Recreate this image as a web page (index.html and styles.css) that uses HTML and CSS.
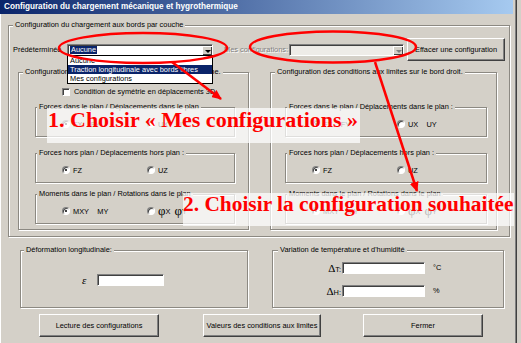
FILE: index.html
```html
<!DOCTYPE html>
<html lang="fr">
<head>
    <meta charset="UTF-8">
    <title>Configuration du chargement mécanique et hygrothermique</title>
    <link rel="stylesheet" href="styles.css">
</head>
<body>
<div class="window">
    <div class="titlebar">Configuration du chargement mécanique et hygrothermique</div>

    <fieldset class="group outer">
        <legend>Configuration du chargement aux bords par couche</legend>
        <div class="preset-row">
            <span class="preset-label">Prédéterminée</span>
            <div class="combo combo-preset">
                <span class="combo-value"><span class="selected">Aucune</span></span>
                <span class="combo-btn"></span>
                <ul class="droplist">
                    <li>Aucune</li>
                    <li class="hover">Traction longitudinale avec bords libres</li>
                    <li>Mes configurations</li>
                </ul>
            </div>
            <span class="mine-label disabled">Mes configurations:</span>
            <div class="combo combo-mine disabled">
                <span class="combo-value"></span>
                <span class="combo-btn"></span>
            </div>
            <button class="btn btn-erase">Effacer une configuration</button>
        </div>

        <div class="sides">
            <fieldset class="group side side-left">
                <legend>Configuration des conditions aux limites sur le bord gauche.</legend>
                <div class="check-row"><span class="checkbox"></span>Condition de symétrie en déplacements 3D</div>
                <fieldset class="group sub">
                    <legend>Forces dans le plan / Déplacements dans le plan</legend>
                    <div class="radio-row">
                        <span class="option"><span class="radio checked"></span>FX&nbsp;&nbsp;&nbsp;&nbsp;FY</span>
                        <span class="option"><span class="radio"></span>UX&nbsp;&nbsp;&nbsp;&nbsp;UY</span>
                    </div>
                </fieldset>
                <fieldset class="group sub">
                    <legend>Forces hors plan / Déplacements hors plan :</legend>
                    <div class="radio-row">
                        <span class="option"><span class="radio checked"></span>FZ</span>
                        <span class="option"><span class="radio"></span>UZ</span>
                    </div>
                </fieldset>
                <fieldset class="group sub">
                    <legend>Moments dans le plan / Rotations dans le plan</legend>
                    <div class="radio-row">
                        <span class="option"><span class="radio checked"></span>MXY&nbsp;&nbsp;&nbsp;&nbsp;MY</span>
                        <span class="option"><span class="radio"></span><span class="phi">φ</span>X&nbsp;&nbsp;<span class="phi">φ</span>Y</span>
                    </div>
                </fieldset>
            </fieldset>

            <fieldset class="group side side-right">
                <legend>Configuration des conditions aux limites sur le bord droit.</legend>
                <div class="check-row"></div>
                <fieldset class="group sub">
                    <legend>Forces dans le plan / Déplacements dans le plan :</legend>
                    <div class="radio-row">
                        <span class="option"><span class="radio checked"></span>FX&nbsp;&nbsp;&nbsp;&nbsp;FY</span>
                        <span class="option"><span class="radio"></span>UX&nbsp;&nbsp;&nbsp;&nbsp;UY</span>
                    </div>
                </fieldset>
                <fieldset class="group sub">
                    <legend>Forces hors plan / Déplacements hors plan :</legend>
                    <div class="radio-row">
                        <span class="option"><span class="radio checked"></span>FZ</span>
                        <span class="option"><span class="radio"></span>UZ</span>
                    </div>
                </fieldset>
                <fieldset class="group sub">
                    <legend>Moments dans le plan / Rotations dans le plan</legend>
                    <div class="radio-row">
                        <span class="option"><span class="radio checked"></span>MXY&nbsp;&nbsp;&nbsp;&nbsp;MY</span>
                        <span class="option"><span class="radio"></span><span class="phi">φ</span>X&nbsp;&nbsp;<span class="phi">φ</span>Y</span>
                    </div>
                </fieldset>
            </fieldset>
        </div>
    </fieldset>

    <div class="lower">
        <fieldset class="group strain">
            <legend>Déformation longitudinale:</legend>
            <div class="field-row eps-row">
                <span class="eps">ε</span>
                <span class="textbox eps-box"></span>
            </div>
        </fieldset>
        <fieldset class="group thermo">
            <legend>Variation de température et d'humidité</legend>
            <div class="field-row">
                <span class="delta-label"><span class="delta">Δ</span>T:</span>
                <span class="textbox"></span>
                <span class="unit">°C</span>
            </div>
            <div class="field-row">
                <span class="delta-label"><span class="delta">Δ</span>H:</span>
                <span class="textbox"></span>
                <span class="unit">%</span>
            </div>
        </fieldset>
    </div>

    <div class="buttons">
        <button class="btn btn-read">Lecture des configurations</button>
        <button class="btn btn-values">Valeurs des conditions aux limites</button>
        <button class="btn btn-close">Fermer</button>
    </div>

    <!-- annotations drawn over the dialog -->
    <svg class="marks" width="521" height="343" viewBox="0 0 521 343">
        <defs>
            <marker id="head" markerUnits="userSpaceOnUse" markerWidth="10" markerHeight="9" refX="9" refY="4.5" orient="auto">
                <path d="M0 0 L10 4.5 L0 9 Z" fill="#ff0000"/>
            </marker>
        </defs>
        <ellipse cx="143" cy="48" rx="84" ry="15" fill="none" stroke="#ff0000" stroke-width="2.5"/>
        <ellipse cx="333" cy="47" rx="83" ry="15.5" fill="none" stroke="#ff0000" stroke-width="2.5"/>
        <line x1="172" y1="62" x2="221" y2="99" stroke="#ff0000" stroke-width="2.5" marker-end="url(#head)"/>
        <line x1="375" y1="62" x2="417" y2="191" stroke="#ff0000" stroke-width="2.5" marker-end="url(#head)"/>
    </svg>
    <div class="note note1">1. Choisir « Mes configurations »</div>
    <div class="note note2">2. Choisir la configuration souhaitée</div>
</div>
</body>
</html>
```

FILE: styles.css
```css
body {
    margin: 0;
    background-color: #d4d0c8;
    font-family: "Liberation Sans", Arial, sans-serif;
    font-size: 7.4px;
    color: #000;
}
.window {
    position: relative;
    width: 516px;
    height: 343px;
    background-color: #d4d0c8;
    border-right: 1px solid #404040;
    box-shadow: inset 1px 0 0 #fff, inset -1px 0 0 #808080;
    overflow: hidden;
}
.titlebar {
    height: 14px;
    line-height: 14px;
    padding-left: 4px;
    margin-right: 3px;
    background: linear-gradient(to right, #0a246a, #a6caf0);
    color: #fff;
    font-weight: bold;
    font-size: 8.2px;
    white-space: nowrap;
}

/* group boxes */
.group {
    margin: 0;
    padding: 0;
    min-width: 0;
    box-sizing: border-box;
    border: 1px solid #8c8982;
    box-shadow: inset 1px 1px 0 #fff, 1px 1px 0 #fff;
}
.group legend {
    margin-left: 3px;
    padding: 0 2px;
    line-height: 10px;
    background-color: #d4d0c8;
    white-space: nowrap;
}
.outer {
    width: 502px;
    margin: 6px 0 0 8px;
}
.outer > legend,
.side > legend { margin-left: 4px; }

.preset-row {
    display: flex;
    align-items: center;
    height: 23px;
    margin: 8px 0 0 4px;
}
.preset-label { width: 54px; }
.mine-label {
    width: 65px;
    margin-left: 11px;
    white-space: nowrap;
}
.disabled {
    color: #808080;
    text-shadow: 1px 1px 0 #fff;
}

/* combo boxes */
.combo {
    position: relative;
    display: flex;
    flex-shrink: 0;
    height: 12px;
    box-sizing: border-box;
    background-color: #fff;
    border: 1px solid;
    border-color: #808080 #fff #fff #808080;
    box-shadow: inset 1px 1px 0 #404040;
}
.combo-preset { width: 146px; }
.combo-mine {
    width: 115px;
    background-color: #eeece8;
}
.combo-value {
    flex: 1;
    padding: 1px 0 0 2px;
    line-height: 8px;
}
.selected {
    display: inline-block;
    padding: 0 1px;
    background-color: #0a246a;
    color: #fff;
}
.combo-btn {
    position: relative;
    width: 9px;
    margin: 1px 0 0;
    background-color: #d4d0c8;
    border-left: 1px solid #fff;
    border-top: 1px solid #fff;
    box-shadow: inset -1px -1px 0 #404040;
}
.combo-btn::after {
    content: "";
    position: absolute;
    left: 2px;
    top: 3px;
    border: 3px solid transparent;
    border-top: 3px solid #000;
    border-bottom: 0;
}
.combo-mine .combo-btn::after { border-top-color: #808080; }
.droplist {
    position: absolute;
    top: 100%;
    left: -1px;
    width: 146px;
    margin: 0;
    padding: 0;
    list-style: none;
    box-sizing: border-box;
    background-color: #fff;
    border: 1px solid #000;
    z-index: 2;
}
.droplist li {
    height: 9px;
    line-height: 9px;
    padding-left: 2px;
    white-space: nowrap;
}
.droplist li.hover {
    background-color: #0a246a;
    color: #fff;
}

/* buttons */
.btn {
    flex-shrink: 0;
    height: 23px;
    padding: 0;
    box-sizing: border-box;
    background-color: #d4d0c8;
    font-family: inherit;
    font-size: 7.4px;
    color: #000;
    white-space: nowrap;
    border: 1px solid;
    border-color: #fff #404040 #404040 #fff;
    box-shadow: inset -1px -1px 0 #808080;
}
.btn-erase {
    width: 98px;
    margin-left: 3px;
}

/* left / right boundary conditions */
.sides {
    display: flex;
    gap: 21px;
    margin: 6px 0 6px 9px;
}
.side { padding-bottom: 5px; }
.side-left { width: 231px; }
.side-right { width: 227px; }
.check-row {
    display: flex;
    align-items: center;
    height: 9px;
    margin: 10px 0 0 43px;
}
.checkbox {
    width: 8px;
    height: 8px;
    margin-right: 4px;
    box-sizing: border-box;
    background-color: #fff;
    border: 1px solid;
    border-color: #808080 #fff #fff #808080;
    box-shadow: inset 1px 1px 0 #404040;
}
.sub {
    margin: 6px 0 0 16px;
    width: 200px;
    padding: 6px 0;
}
.side-right .sub {
    margin-left: 14px;
    width: 202px;
}
.sub:nth-of-type(2) { margin-top: 11px; }
.sub:nth-of-type(4) { margin-top: 5px; }
.sub legend { margin-left: 1px; }

.radio-row {
    display: flex;
    align-items: center;
    height: 12px;
}
.option {
    display: flex;
    align-items: center;
    white-space: nowrap;
}
.option:first-child {
    width: 85px;
    margin-left: 26px;
}
.radio {
    position: relative;
    width: 8px;
    height: 8px;
    margin-right: 3px;
    box-sizing: border-box;
    border-radius: 50%;
    background-color: #fff;
    border: 1px solid;
    border-color: #808080 #fff #fff #808080;
    box-shadow: inset 1px 1px 0 #404040;
}
.radio.checked::after {
    content: "";
    position: absolute;
    left: 2px;
    top: 2px;
    width: 2px;
    height: 2px;
    border-radius: 50%;
    background-color: #000;
}
.phi {
    font-family: "Liberation Serif", serif;
    font-size: 13px;
    line-height: 12px;
}

/* bottom groups */
.lower {
    display: flex;
    gap: 24px;
    margin: 8px 0 0 20px;
}
.lower .group { height: 63px; }
.strain { width: 228px; }
.thermo { width: 232px; }
.thermo legend { margin-left: 5px; }
.field-row {
    display: flex;
    align-items: center;
    height: 13px;
}
.eps-row { margin: 18px 0 0 61px; }
.eps {
    width: 15px;
    font-family: "Liberation Serif", serif;
    font-style: italic;
    font-size: 11px;
}
.textbox {
    width: 83px;
    height: 12px;
    box-sizing: border-box;
    background-color: #fff;
    border: 1px solid;
    border-color: #808080 #fff #fff #808080;
    box-shadow: inset 1px 1px 0 #404040;
}
.eps-box { width: 67px; }
.thermo .field-row { margin-top: 6px; }
.thermo .field-row + .field-row { margin-top: 10px; }
.delta-label {
    width: 68px;
    padding-right: 1px;
    text-align: right;
}
.delta {
    font-family: "Liberation Serif", serif;
    font-size: 11px;
}
.unit { margin-left: 8px; }

.buttons {
    display: flex;
    margin: 6px 0 0 39px;
}
.btn-read { width: 120px; }
.btn-values {
    width: 118px;
    margin-left: 44px;
}
.btn-close {
    width: 120px;
    margin-left: 42px;
}

/* red annotations */
.marks {
    position: absolute;
    left: 0;
    top: 0;
    z-index: 3;
}
.note {
    position: absolute;
    box-sizing: border-box;
    background-color: rgba(255, 255, 255, 0.72);
    color: #ff0000;
    font-family: "Liberation Serif", "Times New Roman", serif;
    font-weight: bold;
    white-space: nowrap;
    z-index: 4;
}
.note1 {
    left: 47px;
    top: 108px;
    width: 313px;
    height: 35px;
    padding: 1px 0 0 1px;
    font-size: 22px;
    line-height: 22px;
}
.note2 {
    left: 183px;
    top: 193px;
    width: 331px;
    height: 33px;
    padding: 1px 0 0 0;
    font-size: 21.4px;
    line-height: 21px;
}
```
